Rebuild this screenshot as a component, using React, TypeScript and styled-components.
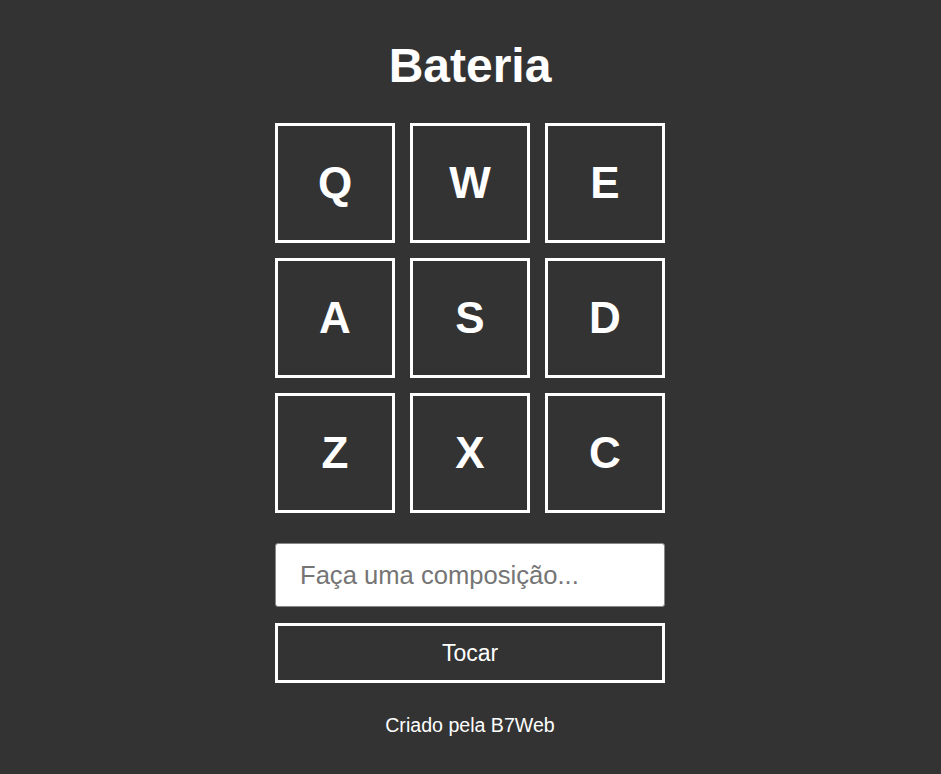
import React from "react";
import styled, { createGlobalStyle } from "styled-components";

const GlobalStyle = createGlobalStyle`
  html, body {
    margin: 0;
    padding: 0;
    background: #333333;
  }
  body {
    font-family: "Liberation Sans", Arial, sans-serif;
    color: #ffffff;
    min-height: 100vh;
  }
`;

const Page = styled.main`
  display: flex;
  flex-direction: column;
  align-items: center;
  padding-top: 38px;
  padding-right: 1px;
`;

const Title = styled.h1`
  margin: 0 0 30px 0;
  font-size: 48px;
  font-weight: 700;
  line-height: normal;
  color: #fff;
`;

const Keys = styled.div`
  display: grid;
  grid-template-columns: repeat(3, 120px);
  grid-auto-rows: 120px;
  gap: 15px;
`;

const Key = styled.div`
  box-sizing: border-box;
  border: 3px solid #fff;
  display: flex;
  align-items: center;
  justify-content: center;
  font-size: 44px;
  font-weight: 700;
  color: #fff;
`;

const Composer = styled.div`
  display: flex;
  flex-direction: column;
  width: 390px;
  margin-top: 30px;
  gap: 16px;
`;

const Input = styled.input`
  box-sizing: border-box;
  height: 64px;
  width: 100%;
  border: 1px solid #888;
  border-radius: 3px;
  background: #fff;
  padding: 0 24px;
  font-family: "Liberation Sans", Arial, sans-serif;
  font-size: 25.6px;
  color: #222;
  outline: none;
  &::placeholder {
    color: #757575;
  }
`;

const PlayButton = styled.button`
  box-sizing: border-box;
  height: 60px;
  width: 100%;
  border: 3px solid #fff;
  background: transparent;
  color: #fff;
  font-family: "Liberation Sans", Arial, sans-serif;
  font-size: 23px;
  cursor: pointer;
`;

const Footer = styled.footer`
  margin-top: 31px;
  font-size: 19.6px;
  line-height: normal;
  color: #fff;
`;

const letters = ["Q", "W", "E", "A", "S", "D", "Z", "X", "C"];

export default function App() {
  return (
    <>
      <GlobalStyle />
      <Page>
        <Title>Bateria</Title>
        <Keys>
          {letters.map((l) => (
            <Key key={l}>{l}</Key>
          ))}
        </Keys>
        <Composer>
          <Input type="text" placeholder="Faça uma composição..." />
          <PlayButton>Tocar</PlayButton>
        </Composer>
        <Footer>Criado pela B7Web</Footer>
      </Page>
    </>
  );
}
